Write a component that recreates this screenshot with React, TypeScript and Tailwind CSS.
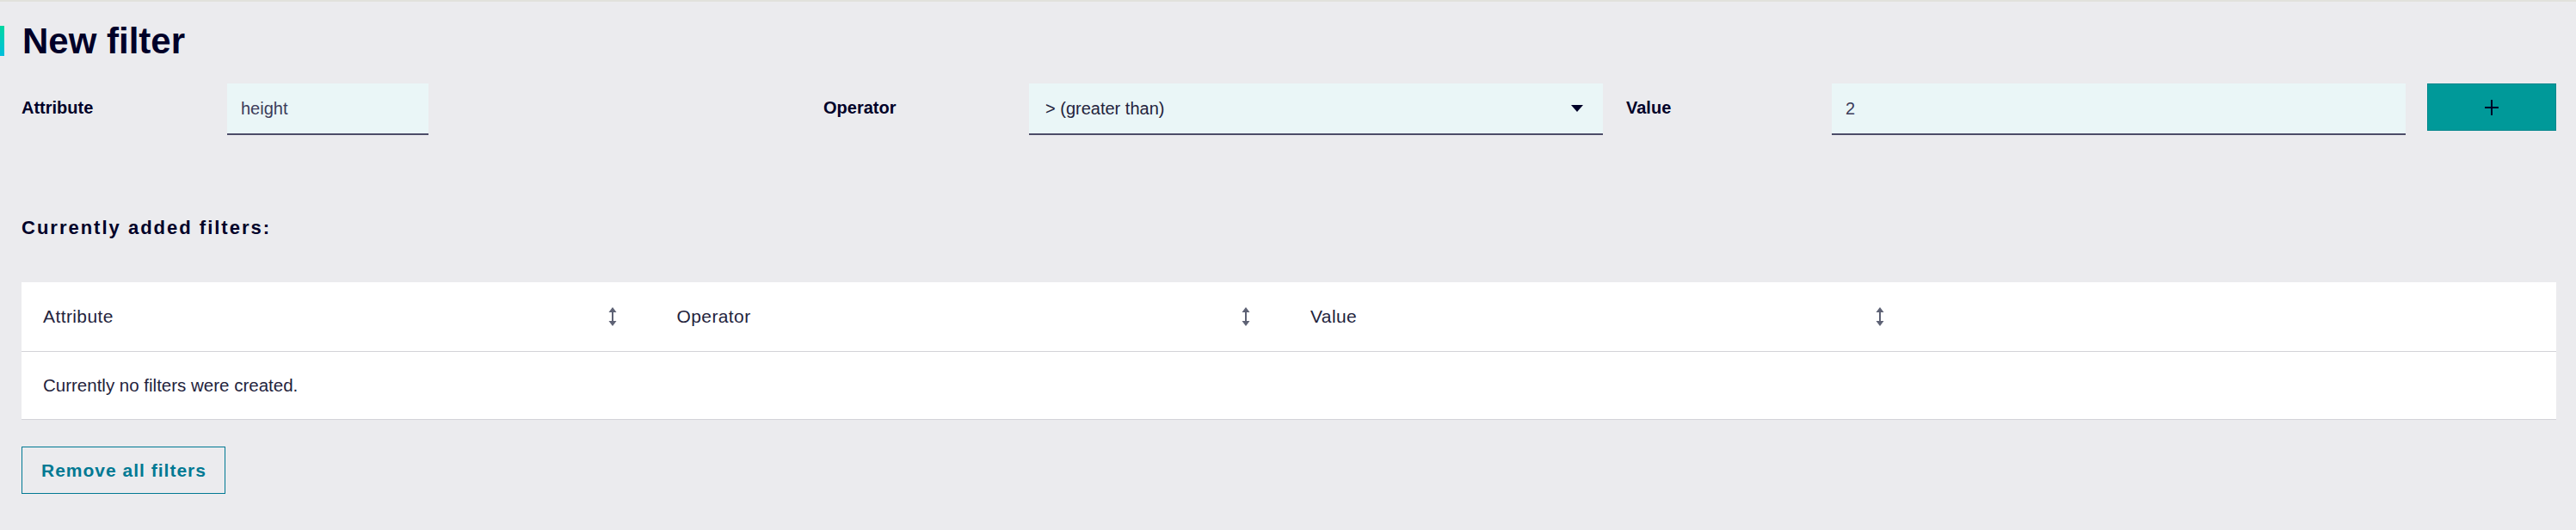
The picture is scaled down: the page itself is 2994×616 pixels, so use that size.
import React from "react";

const SortIcon = () => (
  <svg width="10" height="22" viewBox="0 0 10 22" className="shrink-0 text-[#5e6275]">
    <path d="M5 0 L9.5 6 H0.5 Z" fill="currentColor" />
    <rect x="4" y="5" width="2" height="12" fill="currentColor" />
    <path d="M5 22 L9.5 16 H0.5 Z" fill="currentColor" />
  </svg>
);

const columns = ["Attribute", "Operator", "Value", ""];

export default function App() {
  return (
    <div
      className="min-h-[616px] w-full border-t-2 border-[#e1e1dc] bg-[#ebebee] text-[#000028]"
      style={{ fontFamily: '"Liberation Sans", Arial, sans-serif' }}
    >
      {/* title */}
      <div className="mt-[28px] flex items-center gap-[21px]">
        <div className="h-[35px] w-[5px] bg-gradient-to-b from-[#00d7a0] to-[#00bedc]" />
        <h1 className="text-[42px] leading-[35px] font-bold">New filter</h1>
      </div>

      {/* new filter form */}
      <div className="mt-[32px] flex items-start pr-[23px] pl-[25px]">
        <label className="flex h-[55px] w-[239px] shrink-0 items-center text-[20px] font-bold">Attribute</label>
        <div className="flex h-[60px] w-[234px] shrink-0 items-center border-b-2 border-[#4c4c68] bg-[#eaf6f7] px-[16px] text-[20px] text-[#3c3c5a]">
          height
        </div>
        <div className="flex-1" />
        <label className="flex h-[55px] w-[239px] shrink-0 items-center text-[20px] font-bold">Operator</label>
        <div className="flex h-[60px] w-[667px] shrink-0 items-center justify-between border-b-2 border-[#4c4c68] bg-[#eaf6f7] pr-[23px] pl-[19px] text-[20px] text-[#23233c]">
          <span>&gt; (greater than)</span>
          <svg width="14" height="8" viewBox="0 0 14 8">
            <path d="M0 0 H14 L7 8 Z" fill="#000028" />
          </svg>
        </div>
        <label className="ml-[27px] flex h-[55px] w-[239px] shrink-0 items-center text-[20px] font-bold">Value</label>
        <div className="flex h-[60px] w-[667px] shrink-0 items-center border-b-2 border-[#4c4c68] bg-[#eaf6f7] px-[16px] text-[20px] text-[#3c3c5a]">
          2
        </div>
        <button className="ml-[25px] flex h-[55px] w-[150px] shrink-0 items-center justify-center border border-[#00868c] bg-[#009999]">
          <svg width="18" height="18" viewBox="0 0 18 18">
            <rect x="8" y="0" width="2" height="18" fill="#000028" />
            <rect x="1" y="8" width="16" height="2" fill="#000028" />
          </svg>
        </button>
      </div>

      {/* added filters */}
      <div className="pr-[23px] pl-[25px]">
        <h3 className="mt-[97px] text-[22px] leading-[21px] font-bold tracking-[2px]">Currently added filters:</h3>

        <div className="mt-[53px] border-b border-[#d3d3d8] bg-white">
          <div className="grid h-[81px] grid-cols-4 border-b border-[#d3d3d8]">
            {columns.map((c, i) => (
              <div key={i} className="flex items-center justify-between pr-[45px] pl-[25px] text-[21px] tracking-[0.4px] text-[#23233c]">
                <span>{c}</span>
                {c && <SortIcon />}
              </div>
            ))}
          </div>
          <div className="flex h-[78px] items-center pl-[25px] text-[20.5px] text-[#23233c]">
            Currently no filters were created.
          </div>
        </div>

        <button className="mt-[31px] flex h-[55px] w-[237px] items-center border border-[#007993] pl-[22px] text-[21px] font-bold tracking-[1px] text-[#007993]">
          Remove all filters
        </button>
      </div>
    </div>
  );
}
